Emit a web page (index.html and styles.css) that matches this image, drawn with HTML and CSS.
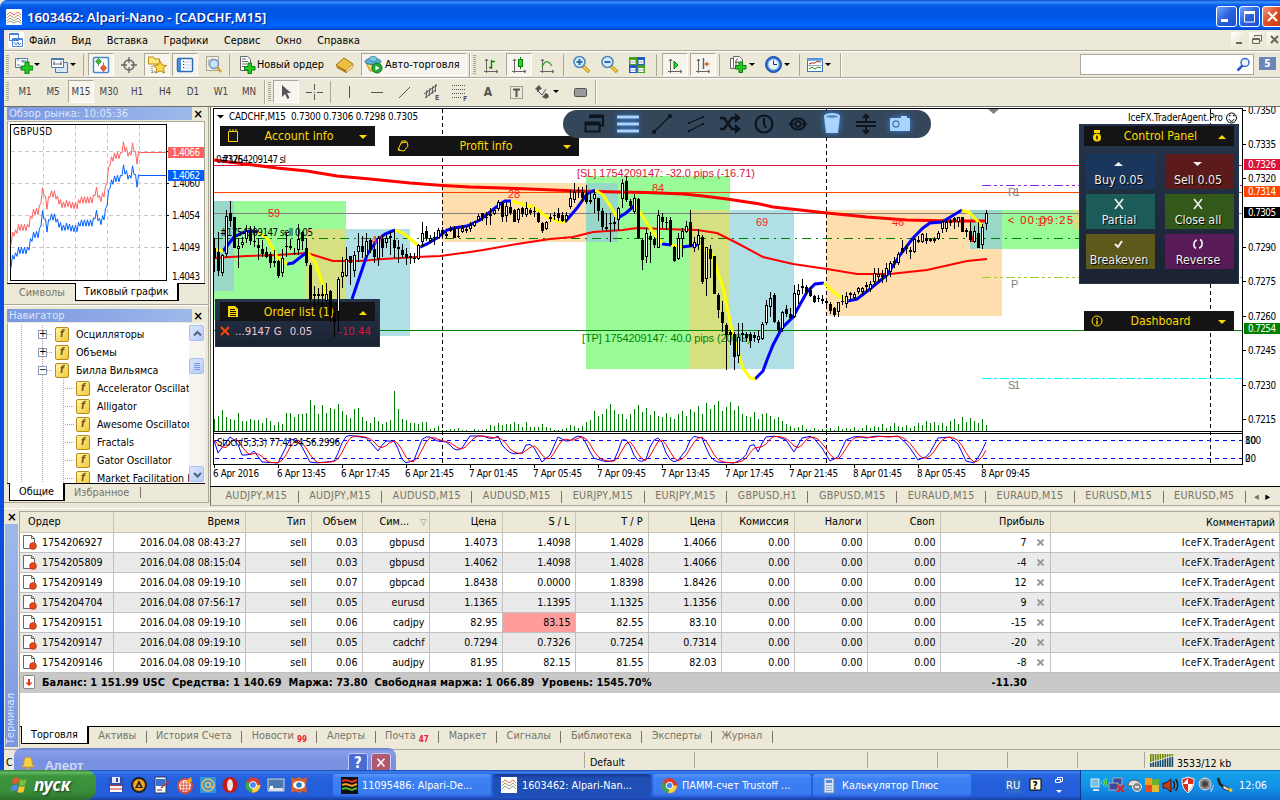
FILE: index.html
```html
<!DOCTYPE html>
<html lang="ru">
  <head>
    <meta charset="utf-8">
    <title>1603462: Alpari-Nano - [CADCHF,M15]</title>
    <link rel="stylesheet" href="styles.css">
  </head>
  <body>
    <div class="desktop">
      <div class="title-bar">
        <svg class="app-icon" width="16" height="16"><rect width="16" height="16" rx="1" fill="#fff"/><path d="M1 6l3-3 4 3 4-3 3 3" stroke="#e07050" fill="none"/><path d="M1 9l3-3 4 3 4-3 3 3" stroke="#d09060" fill="none"/><path d="M1 12l3-3 4 3 4-3 3 3M1 14l3-2 4 2 4-2 3 2" stroke="#90a070" fill="none"/></svg>
        <span class="title-text">1603462: Alpari-Nano - [CADCHF,M15]</span>
        <div class="window-buttons">
          <span class="win-btn"><svg width="19" height="19"><rect x="4" y="12" width="7" height="3" fill="#fff"/></svg></span>
          <span class="win-btn"><svg width="19" height="19"><path d="M4 5h11M4.500 5v10h10V5" stroke="#fff" fill="none"/><rect x="4" y="4" width="11" height="3" fill="#fff"/></svg></span>
          <span class="win-btn win-close"><svg width="19" height="19"><path d="M5 5l9 9M14 5l-9 9" stroke="#fff" stroke-width="2.200"/></svg></span>
        </div>
      </div>

      <div class="window">
        <div class="menu-bar">
          <svg class="menu-icon" width="16" height="16"><rect width="16" height="16" fill="#fff"/><path d="M1.500 1.500h9v7h-9zM4.500 6.500h10v8h-10z" fill="#fff" stroke="#4a80d8"/><path d="M1 2.500h10M4 7.500h11" stroke="#4a80d8"/><path d="M6 10l2 3 2-3 1 3 2-2" stroke="#4a80d8" fill="none"/></svg>
          <span>Файл</span><span>Вид</span><span>Вставка</span><span>Графики</span><span>Сервис</span><span>Окно</span><span>Справка</span>
          <div class="mdi-buttons">
            <b><svg width="16" height="16"><rect x="5" y="10" width="6" height="2" fill="#666658"/></svg></b>
            <b><svg width="16" height="16"><path d="M5.500 5V3.500h7V9H11M3.500 6.500h7v5h-7zM3 7.500h8" stroke="#666658" fill="none"/></svg></b>
            <b><svg width="16" height="16"><path d="M4 4l7 7M11 4l-7 7" stroke="#666658" stroke-width="2"/></svg></b>
          </div>
        </div>

        <div class="toolbar">
          <i class="grip"></i>
          <div class="btn drop"><svg width="19" height="18"><path d="M1.500 2.500h12v9h-12z" fill="#fff" stroke="#4a7ab8"/><path d="M3 4h2M3 9h3M9 4v3M7 5h5" stroke="#4a7ab8"/><path d="M11 6h4v4h4v4h-4v4h-4v-4H7v-4h4z" fill="#22cc22" stroke="#0a7a0a"/></svg></div>
          <div class="btn drop drop-b"><svg width="19" height="18"><path d="M5.500 6.500h12v10h-12z" fill="#d8e6f8" stroke="#4a7ab8"/><path d="M1.500 2.500h12v9h-12z" fill="#fff" stroke="#4a7ab8"/><path d="M2 3.500h11" stroke="#4a7ab8"/><path d="M4 5v4M11 5v4M3 8h9" stroke="#667"/></svg></div>
          <i class="sep"></i>
          <div class="btn on"><svg width="18" height="18"><rect x="1.500" y="1.500" width="15" height="15" rx="1" fill="#fff" stroke="#4a86c8" stroke-width="1.500"/><path d="M6.500 2.500l3 3-3 3-3-3z" fill="#3cb83c" stroke="#0a7a1a" stroke-width=".6"/><path d="M11.500 8.500l3 3.500-3 3.500-3-3.500z" fill="#e86030" stroke="#b02a10" stroke-width=".6"/><path d="M6.500 8v2M11.500 6.500v2" stroke="#777"/></svg></div>
          <div class="btn"><svg width="18" height="18"><circle cx="9" cy="9" r="5" fill="none" stroke="#666" stroke-width="1.500"/><path d="M9 1v6M9 11v6M1 9h6M11 9h6" stroke="#666" stroke-width="1.300"/></svg></div>
          <div class="btn on"><svg width="20" height="20"><path d="M1.500 3.500V2h5l1 2h5v5h-11z" fill="#ffe880" stroke="#b88a10"/><path d="M5 11v7M5 17h4" stroke="#555" stroke-dasharray="1 1"/><path d="M13 6l2 4 4.500.5-3.200 3 1 4.500-4.300-2.300L8.700 18l1-4.500-3.200-3L11 10z" fill="#ffd84a" stroke="#b8860b"/></svg></div>
          <div class="btn on"><svg width="18" height="18"><rect x="1.500" y="2.500" width="15" height="13" rx="1" fill="#fff" stroke="#2a6ab8" stroke-width="1.500"/><rect x="2" y="3" width="3" height="12" fill="#4a8ad8"/><path d="M8 6h7M8 9h7M8 12h7" stroke="#b8ccf0"/><path d="M7 5.500h1M7 8.500h1M7 11.500h1" stroke="#333"/></svg></div>
          <div class="btn"><svg width="19" height="19"><path d="M2.500 1.500h12v14h-12z" fill="#f4f0e0" stroke="#a8a498"/><path d="M5 4v7M8 3v6M12 4v5" stroke="#99a"/><circle cx="10" cy="9" r="4.500" fill="#c8e2f8" stroke="#6898c0" stroke-width="1.400"/><path d="M13 12l4 5" stroke="#d8a020" stroke-width="2.500"/></svg></div>
          <i class="sep"></i>
          <div class="btn new-order"><svg width="20" height="20"><path d="M3.500 1.500h7l3 3v11h-10z" fill="#fff" stroke="#666"/><path d="M5 4h4M5 6.500h6M5 9h5M5 11.500h4" stroke="#666"/><path d="M11 8h3.500v3.500H18V15h-3.500v3.500H11V15H7.500v-3.500H11z" fill="#22cc22" stroke="#0a7a0a"/></svg><span>Новый ордер</span></div>
          <div class="btn gold"><svg width="19" height="18"><path d="M1 9l8-7 9 6-7 8z" fill="#ecc040" stroke="#a87010"/><path d="M1 9l10 5v3L2 12z" fill="#b87818"/><path d="M11 14l7-6v3l-7 6z" fill="#f8e0a0" stroke="#a87010" stroke-width=".6"/></svg></div>
          <div class="btn on auto"><svg width="19" height="19"><path d="M2 8l14-1-3 9H6z" fill="#f0d060" stroke="#b89020"/><ellipse cx="9" cy="6.500" rx="8" ry="3" fill="#5ab0d0" stroke="#2a7a9a"/><ellipse cx="9" cy="4" rx="4" ry="2.600" fill="#7cc8e4" stroke="#2a7a9a" stroke-width=".7"/><circle cx="13" cy="13" r="5" fill="#22a834" stroke="#0a7a1a"/><path d="M11.500 10.500l4 2.500-4 2.500z" fill="#fff"/></svg><span>Авто-торговля</span></div>
          <i class="edge"></i>
          <i class="grip grip-b"></i>
          <div class="btn"><svg width="18" height="18"><path d="M4.500 3v14M2 15.500h14M3 5l1.500-2L6 5M14 14l2 1.500-2 1.500" stroke="#666" fill="none"/><path d="M9.500 4v9M7 11.500h2.500M9.500 5.500H13" stroke="#0a8a0a" stroke-width="1.500"/></svg></div>
          <div class="btn on"><svg width="18" height="18"><path d="M4.500 3v14M2 15.500h14M3 5l1.500-2L6 5M14 14l2 1.500-2 1.500" stroke="#666" fill="none"/><path d="M10.500 1v12" stroke="#0a7a0a"/><rect x="8.500" y="3.500" width="4" height="7" fill="#2ad82a" stroke="#0a7a0a"/></svg></div>
          <div class="btn"><svg width="18" height="18"><path d="M4.500 3v14M2 15.500h14M3 5l1.500-2L6 5M14 14l2 1.500-2 1.500" stroke="#666" fill="none"/><path d="M4 11c3-7 6-7 10-1" stroke="#2a9a2a" fill="none" stroke-width="1.200"/></svg></div>
          <i class="sep"></i>
          <div class="btn"><svg width="19" height="19"><path d="M11 11l6 6" stroke="#b88a10" stroke-width="3.600"/><path d="M11 11l5.500 5.500" stroke="#f4d040" stroke-width="2"/><circle cx="7.500" cy="7" r="5.500" fill="#d8ecfc" stroke="#4a86c0" stroke-width="1.500"/><path d="M4.500 7h6M7.500 4v6" stroke="#2a6aa8" stroke-width="2"/></svg></div>
          <div class="btn"><svg width="19" height="19"><path d="M11 11l6 6" stroke="#b88a10" stroke-width="3.600"/><path d="M11 11l5.500 5.500" stroke="#f4d040" stroke-width="2"/><circle cx="7.500" cy="7" r="5.500" fill="#d8ecfc" stroke="#4a86c0" stroke-width="1.500"/><path d="M4.500 7h6" stroke="#2a6aa8" stroke-width="2"/></svg></div>
          <div class="btn"><svg width="18" height="18"><rect x="1" y="1" width="8" height="8" fill="#48a01c"/><rect x="9" y="1" width="8" height="8" fill="#2458c8"/><rect x="1" y="9" width="8" height="8" fill="#2458c8"/><rect x="9" y="9" width="8" height="8" fill="#48a01c"/><path d="M2.500 4h5v4h-5zM10.500 4h5v4h-5zM2.500 12h5v4h-5zM10.500 12h5v4h-5z" fill="#fff"/><path d="M3 6h4M11 6h4M3 14h4M11 14h4" stroke="#9ab"/></svg></div>
          <i class="sep sep-w"></i>
          <div class="btn on"><svg width="18" height="18"><path d="M4.500 3v14M2 15.500h14M3 5l1.500-2L6 5M14 14l2 1.500-2 1.500" stroke="#666" fill="none"/><path d="M8 5l4 4-4 4z" fill="#2ad82a" stroke="#0a7a0a"/></svg></div>
          <div class="btn on"><svg width="18" height="18"><path d="M4.500 3v14M2 15.500h14M3 5l1.500-2L6 5M14 14l2 1.500-2 1.500" stroke="#666" fill="none"/><path d="M9.500 2v11" stroke="#2a6aa8" stroke-width="1.400"/><path d="M10.500 8l3-2.500v2h2v1h-2v2z" fill="#d84a10"/></svg></div>
          <i class="sep"></i>
          <div class="btn drop drop-c"><svg width="19" height="19"><path d="M1.500 3.500h7v10h-7z" fill="#fff" stroke="#666"/><path d="M4.500 1.500h6l3 3v9h-9z" fill="#fff" stroke="#666"/><path d="M9 4c-2 0-2 1-2 3v4M6 7h4" stroke="#555" fill="none"/><path d="M10 7h3.500v3.500H17V14h-3.500v3.500H10V14H6.500v-3.500H10z" fill="#22cc22" stroke="#0a7a0a"/></svg></div>
          <div class="btn drop"><svg width="19" height="19"><circle cx="9.500" cy="9.500" r="8" fill="#2a6ad0" stroke="#1a4a98"/><circle cx="9.500" cy="9.500" r="5.500" fill="#e8f2fc" stroke="#8ab4e8"/><path d="M9.500 5.500v4h3.500" stroke="#333" fill="none"/></svg></div>
          <i class="sep"></i>
          <div class="btn drop"><svg width="18" height="18"><rect x="1.500" y="2.500" width="15" height="13" fill="#fff" stroke="#3a78b8"/><path d="M1 3.500h16" stroke="#5a98e0" stroke-width="2.500"/><path d="M3 8l3-1 3 0 2-1.500 4 .5" stroke="#a82a1a" fill="none"/><path d="M3 13l3-2 3 2 3-2 3 1" stroke="#1a8a2a" fill="none"/><path d="M2 9.500h14" stroke="#9ab"/></svg></div>
          <i class="edge"></i>
          <div class="search">
            <div class="search-box"><svg width="15" height="15"><circle cx="9" cy="5.500" r="4" fill="#eef4ff" stroke="#3a68d0" stroke-width="1.500"/><path d="M6.500 8.500L1.500 13.500" stroke="#2a58c8" stroke-width="2.500"/></svg></div>
            <div class="mail-count">5</div>
          </div>
        </div>

        <div class="toolbar toolbar-b">
          <i class="grip"></i>
          <div class="btn tf">M1</div><div class="btn tf">M5</div><div class="btn tf on">M15</div><div class="btn tf">M30</div><div class="btn tf">H1</div><div class="btn tf">H4</div><div class="btn tf">D1</div><div class="btn tf">W1</div><div class="btn tf">MN</div>
          <i class="edge"></i>
          <i class="grip grip-b"></i>
          <div class="btn on"><svg width="18" height="18"><path d="M5 2v12l3-3 2.500 5 2-1-2.500-5h4z" fill="#555"/></svg></div>
          <div class="btn"><svg width="18" height="18"><path d="M9.500 1v6M9.500 11v6M1 9.500h6M12 9.500h6" stroke="#555"/><rect x="9" y="9" width="1" height="1" fill="#555"/></svg></div>
          <i class="sep"></i>
          <div class="btn"><svg width="18" height="18"><path d="M10.500 3v12" stroke="#555"/></svg></div>
          <div class="btn"><svg width="18" height="18"><path d="M4 9.500h12" stroke="#555"/></svg></div>
          <div class="btn"><svg width="18" height="18"><path d="M4 15L15 4" stroke="#555"/></svg></div>
          <div class="btn"><svg width="20" height="20"><path d="M2 12L15 3M3 16l11-8M5 8l-1 8M8 6l-1 8M11 4l-1 8M14 2l-1 8" stroke="#555" fill="none"/><text class="icon-letter" x="13" y="18">E</text></svg></div>
          <div class="btn"><svg width="20" height="20"><path d="M2 3.500h14M2 7.500h14M2 11.500h14M2 15.500h10" stroke="#555" stroke-dasharray="1 1"/><text class="icon-letter" x="13" y="19">F</text></svg></div>
          <div class="btn letter">A</div>
          <div class="btn"><svg width="18" height="18"><rect x="3.500" y="3.500" width="12" height="12" fill="none" stroke="#555" stroke-dasharray="1 1"/><path d="M6 6.500h7M9.500 6v8" stroke="#555" stroke-width="2"/></svg></div>
          <div class="btn drop"><svg width="19" height="18"><path d="M2 6l4-4 3 4-3 1v2H4V7zM9 14l3-3v-1l3 1 1 3-3 2z" fill="#555"/><path d="M6 9l3 3 4-6" stroke="#555" fill="none"/></svg></div>
          <div class="btn"><svg width="18" height="18"><rect x="3.500" y="5.500" width="12" height="8" rx="1" fill="#999" stroke="#555"/></svg></div>
          <i class="edge"></i>
        </div>

        <div class="workspace">
          <div class="side">
            <div class="market-watch">
              <div class="pane-title"><span>Обзор рынка: 10:05:36</span><b>×</b></div>
              <div class="pane-body"><svg class="tick-chart" id="ticks" width="198" height="162" viewBox="8 122 198 162"></svg></div>
              <div class="tabs tabs-market"><span>Символы</span><span class="active">Тиковый график</span></div>
            </div>
            <div class="navigator">
              <div class="pane-title"><span>Навигатор</span><b>×</b></div>
              <div class="nav-body">
                <div class="tree" id="tree"></div>
                <div class="scrollbar">
                  <i><svg width="15" height="15"><path d="M4 9.500l3.500-3.500 3.500 3.500" stroke="#4d6185" stroke-width="2" fill="none"/></svg></i>
                  <i class="thumb"><svg width="15" height="15"><path d="M4 4.500h6M4 6.500h6M4 8.500h6M4 10.500h6" stroke="#7a9ae0"/></svg></i>
                  <i><svg width="15" height="15"><path d="M4 6l3.500 3.500L11 6" stroke="#4d6185" stroke-width="2" fill="none"/></svg></i>
                </div>
              </div>
              <div class="tabs tabs-nav"><span class="active">Общие</span><span>Избранное</span><em></em></div>
            </div>
          </div>

          <div class="chart-area">
            <div class="chart">
              <svg class="layer" id="chart" width="1070" height="380" viewBox="210 107 1070 380"></svg>

              <div class="panel-bar account"><svg width="12" height="16"><path d="M1.500 3.500h9v10h-9zM3 1v3M6 1v3M9 1v3" stroke="#ffd800" fill="none"/></svg><span>Account info</span><i class="down"></i></div>
              <div class="panel-bar profit"><svg width="13" height="14"><path d="M5 4l6-1 1 4-4 5-6-1zM5 4l1-2 4 0v1M2 9l2 2" stroke="#ffd800" fill="none"/></svg><span>Profit info</span><i class="down"></i></div>

              <div class="tool-pill">
                <svg width="24" height="24"><path d="M7 3.500h14v10h-3M3.500 10.500h14v9h-14z" fill="#34465a" stroke="#0c141e" stroke-width="2"/><path d="M7 4.500h14M3 12h15" stroke="#0c141e" stroke-width="3"/></svg>
                <svg class="lit" width="24" height="24"><path d="M1 5h22M1 12h22M1 19h22" stroke="#a8d4ff" stroke-width="3"/></svg>
                <svg width="24" height="24"><path d="M4 20L20 4" stroke="#0c141e" stroke-width="1.500"/><circle cx="4" cy="20" r="2" fill="#0c141e"/><circle cx="20" cy="4" r="2" fill="#0c141e"/></svg>
                <svg width="24" height="24"><path d="M5 11L19 5M5 19l14-7" stroke="#0c141e" stroke-width="1.300"/><path d="M4 10h2v2H4zM18 4h2v2h-2zM4 18h2v2H4zM18 11h2v2h-2z" fill="#0c141e"/></svg>
                <svg width="24" height="24"><path d="M2 6h4l8 11h4M2 17h4l8-11h4" stroke="#0c141e" stroke-width="2.500" fill="none"/><path d="M17 1l6 5-6 5zM17 12l6 5-6 5z" fill="#0c141e"/></svg>
                <svg width="24" height="24"><circle cx="12" cy="12" r="8.500" stroke="#0c141e" stroke-width="2.200" fill="none"/><path d="M12 6v6l2 4" stroke="#0c141e" stroke-width="2" fill="none"/></svg>
                <svg width="24" height="24"><circle cx="12" cy="12" r="2.800" stroke="#0c141e" stroke-width="2" fill="none"/><path d="M5 11c3-6 11-6 14 0M5 13c3 6 11 6 14 0" stroke="#0c141e" stroke-width="2.200" fill="none"/><path d="M2 13l4-4 2 4zM22 11l-4 4-2-4z" fill="#0c141e"/></svg>
                <svg class="lit" width="24" height="24"><path d="M4 4h16l-2 17H6z" fill="#a8d4ff"/><ellipse cx="12" cy="4" rx="8" ry="3" fill="#a8d4ff"/><ellipse cx="12" cy="4.500" rx="6" ry="1.500" fill="#5a8cc0"/></svg>
                <svg width="24" height="24"><path d="M2 10h20M2 14h20" stroke="#0c141e" stroke-width="2"/><path d="M12 1l4 5h-3v4h-2V6H8zM12 23l4-5h-3v-4h-2v4H8z" fill="#0c141e"/></svg>
                <svg class="lit" width="24" height="24"><rect x="2" y="6" width="20" height="13" rx="1" fill="#a8d4ff"/><rect x="13" y="4" width="6" height="4" fill="#a8d4ff"/><circle cx="8" cy="12" r="3" fill="none" stroke="#4a7cb0" stroke-width="1.300"/></svg>
              </div>

              <div class="order-list">
                <div class="panel-bar"><svg width="12" height="13"><path d="M1 1h7l3 3v8H1z" fill="#ffd800"/><path d="M3 4.500h5M3 6.500h6M3 8.500h6M3 10.500h6" stroke="#111"/></svg><span>Order list (1)</span><i class="up"></i></div>
                <div class="order-line"><svg width="10" height="10"><path d="M1 1l8 8M9 1l-8 8" stroke="#ff4500" stroke-width="2"/></svg><span>...9147 G</span><span>0.05</span><span class="loss">-10.44</span></div>
              </div>
              <svg class="layer" id="candles" width="1070" height="380" viewBox="210 107 1070 380"></svg>

              <div class="control">
                <div class="panel-bar"><svg width="12" height="14"><path d="M3 1h6v3H3z" fill="#ffd800"/><circle cx="6" cy="8.500" r="4" fill="#ffd800"/><path d="M6 6.500v4" stroke="#111" stroke-width="1.500"/></svg><span>Control Panel</span><i class="up"></i></div>
                <div class="control-grid">
                  <div class="action buy"><i><svg width="12" height="6"><path d="M1 5h9L5.500 1z" fill="#f0f0f0"/></svg></i>Buy 0.05</div>
                  <div class="action sell"><i><svg width="12" height="6"><path d="M1 1h9L5.500 5z" fill="#f0f0f0"/></svg></i>Sell 0.05</div>
                  <div class="action partial"><i><svg width="12" height="12"><path d="M2 1l8 10M10 1L2 11" stroke="#f0f0f0" stroke-width="1.600"/></svg></i>Partial</div>
                  <div class="action close-all"><i><svg width="12" height="12"><path d="M2 1l8 10M10 1L2 11" stroke="#f0f0f0" stroke-width="1.600"/></svg></i>Close all</div>
                  <div class="action even"><i><svg width="12" height="12"><path d="M2 6l3 3 4-6" stroke="#f0f0f0" stroke-width="2" fill="none"/></svg></i>Breakeven</div>
                  <div class="action reverse"><i><svg width="12" height="12"><path d="M5 2C1 3 1 9 4 10.500M7 10c4-1 4-7 1-8.500" stroke="#f0f0f0" stroke-width="1.600" fill="none"/></svg></i>Reverse</div>
                </div>
              </div>
              <div class="panel-bar dashboard"><svg width="12" height="14"><circle cx="6" cy="7" r="5" fill="none" stroke="#ffd800"/><path d="M6 4v1.500M6 6.500v4" stroke="#ffd800" stroke-width="1.500"/></svg><span>Dashboard</span><i class="down"></i></div>
            </div>
            <div class="chart-tabs">
              <span>AUDJPY,M15</span><span>AUDJPY,M15</span><span>AUDUSD,M15</span><span>AUDUSD,M15</span><span>EURJPY,M15</span><span>EURJPY,M15</span><span>GBPUSD,H1</span><span>GBPUSD,M15</span><span>EURAUD,M15</span><span>EURAUD,M15</span><span>EURUSD,M15</span><span>EURUSD,M5</span><b>◂ &nbsp;<strong>▸</strong></b>
            </div>
          </div>
        </div>

        <div class="terminal">
          <div class="terminal-strip"><b>×</b><div><span>Терминал</span></div></div>
          <div class="terminal-main">
            <table>
              <thead>
                <tr><th class="c-order">Ордер</th><th class="c-time">Время</th><th class="c-type">Тип</th><th class="c-vol">Объем</th><th class="c-sym">Сим... <small>▽</small></th><th class="c-n">Цена</th><th class="c-n">S / L</th><th class="c-n">T / P</th><th class="c-n">Цена</th><th class="c-n">Комиссия</th><th class="c-n">Налоги</th><th class="c-n">Своп</th><th class="c-profit">Прибыль</th><th>Комментарий</th></tr>
              </thead>
              <tbody id="orders"></tbody>
            </table>
            <div class="balance"><svg width="13" height="15"><rect x=".5" y=".5" width="11" height="13" rx="1" fill="#fff" stroke="#888"/><path d="M6 11L2.500 7.500H5V4h2v3.500h2.500z" fill="#d83a10"/></svg><span>Баланс: 1 151.99 USC&nbsp; Средства: 1 140.69&nbsp; Маржа: 73.80&nbsp; Свободная маржа: 1 066.89&nbsp; Уровень: 1545.70%</span><span class="total">-11.30</span></div>
            <div class="terminal-space"></div>
            <div class="tabs tabs-terminal"><span class="active">Торговля</span><span>Активы</span><span>История Счета</span><span>Новости <sub>99</sub></span><span>Алерты</span><span>Почта <sub>47</sub></span><span>Маркет</span><span>Сигналы</span><span>Библиотека</span><span>Эксперты</span><span>Журнал</span></div>
          </div>
        </div>

        <div class="status-bar">
          <span class="s-help">С</span><span class="s-profile">Default</span><span class="s-a"></span><span class="s-b"></span><span class="s-b"></span><span class="s-b"></span><span class="s-c"></span>
          <span class="s-net"><svg id="signal" width="24" height="14"></svg>3533/12 kb</span>
        </div>

        <div class="alert-window">
          <svg width="14" height="15"><path d="M7 1c4 0 4 4 4.500 8l2 2h-13l2-2C3 5 3 1 7 1z" fill="#f8d040" stroke="#c89010" stroke-width=".7"/><circle cx="7" cy="12.500" r="1.500" fill="#e0a010"/></svg>
          <span>Алерт</span><b class="help">?</b><b class="x">✕</b>
        </div>
      </div>

      <div class="taskbar">
        <div class="start">
          <svg width="20" height="20"><path d="M3 4c2-2 4-2 6-.5L8 9c-2-1-4-1-6 .5z" fill="#e8552a"/><path d="M10 4c2 1.500 4 1.500 6.500 0L15 10c-2 1-4 1-6 0z" fill="#7ac043"/><path d="M2 11c2-1.500 4-1.500 6-.5L6.500 16c-2-1-4-1-6 .5z" fill="#4a8af4"/><path d="M9 11c2 1 4 1 6 0l-1.500 6c-2 1-4 1-6 0z" fill="#fbc82c"/></svg>
          <span>пуск</span>
        </div>
        <div class="quick">
          <svg width="18" height="18"><rect x="2" y="1" width="14" height="16" rx="1" fill="#2a50b0"/><rect x="5" y="1" width="8" height="6" fill="#e8e8f0"/><rect x="9" y="2" width="2" height="4" fill="#2a50b0"/><rect x="3" y="9" width="12" height="7" fill="#fff"/><path d="M3 9.500h12M3 13h12" stroke="#c33"/></svg>
          <svg width="18" height="18"><circle cx="9" cy="9" r="7" fill="#f0a820" stroke="#222" stroke-width="2"/><path d="M9 4l4 8H5z" fill="#222"/><path d="M9 8l1.500 3h-3z" fill="#f0a820"/></svg>
          <svg width="18" height="18"><path d="M2 1h11v16H2z" fill="#fff" stroke="#335"/><path d="M3 3h9v7H3z" fill="#3a70d0"/><path d="M4 14h5" stroke="#335"/><path d="M8 12l8-7" stroke="#c33" stroke-width="1.500"/></svg>
          <svg width="18" height="18"><circle cx="9" cy="10" r="7" fill="#fff" stroke="#d84a3a" stroke-width="2"/><path d="M4 8h10M3 11h12M5 14h8M6 5v10M9 5v12M12 5v10" stroke="#d84a3a" stroke-width="1" fill="none"/><path d="M10 5l5-4 1 4-4 3z" fill="#f8a020"/></svg>
          <svg width="18" height="18"><rect x="1" y="1" width="16" height="16" fill="#2a9ae0"/><circle cx="9" cy="9" r="6" fill="none" stroke="#f4b860" stroke-width="1.500"/><circle cx="9" cy="9" r="2.500" fill="none" stroke="#f4b860" stroke-width="1.500"/><path d="M11.500 6.500v3.500c0 2 3 2 3.500-1" fill="none" stroke="#f4b860" stroke-width="1.300"/></svg>
          <svg width="18" height="18"><ellipse cx="9" cy="9" rx="7.500" ry="8" fill="#c81818"/><ellipse cx="9" cy="9" rx="3" ry="6" fill="#f4e4e4"/></svg>
          <svg width="18" height="18"><circle cx="9" cy="9" r="7.500" fill="#e03a2a"/><path d="M9 9L2.500 5.500A7.500 7.500 0 0 0 8 16.500z" fill="#3aa84a"/><path d="M9 9h7.500A7.500 7.500 0 0 1 8 16.500z" fill="#fbd03a"/><circle cx="9" cy="9" r="3.500" fill="#4a8af4" stroke="#fff"/></svg>
          <svg width="18" height="18"><rect x="1" y="3" width="16" height="12" fill="#4a7ab0" stroke="#c8d0d8"/><rect x="2" y="12" width="14" height="3" fill="#d8e0e8"/><rect x="3" y="10" width="3" height="3" fill="#fff"/></svg>
          <svg width="18" height="18"><path d="M1 1l4 2 4-2 4 2 4-2-1 8 1 8-4-2-4 2-4-2-4 2 1-8z" fill="#d8602a"/><ellipse cx="9" cy="9" rx="6" ry="4" fill="#fff"/><circle cx="9" cy="9" r="2.800" fill="#2a80c0"/></svg>
        </div>
        <div class="tasks">
          <div class="task"><svg width="17" height="17"><rect width="17" height="17" fill="#111"/><path d="M1 4l4-1 6 2 5-2" stroke="#e83020" stroke-width="2" fill="none"/><path d="M1 8l4-1 6 2 5-2" stroke="#f0a020" stroke-width="2" fill="none"/><path d="M1 12l4-1 6 2 5-2" stroke="#50b030" stroke-width="2" fill="none"/></svg><span>11095486: Alpari-De...</span></div>
          <div class="task current"><svg width="17" height="17"><rect width="16" height="16" fill="#fff"/><path d="M1 6l3-3 4 3 4-3 3 3" stroke="#e07050" fill="none"/><path d="M1 9l3-3 4 3 4-3 3 3M1 12l3-3 4 3 4-3 3 3" stroke="#90a070" fill="none"/></svg><span>1603462: Alpari-Nan...</span></div>
          <div class="task"><svg width="17" height="17"><circle cx="8.500" cy="8.500" r="7.500" fill="#e03a2a"/><path d="M8.500 8.500L2 5A7.500 7.500 0 0 0 7.500 16z" fill="#3aa84a"/><path d="M8.500 8.500H16A7.500 7.500 0 0 1 7.500 16z" fill="#fbd03a"/><circle cx="8.500" cy="8.500" r="3.300" fill="#4a8af4" stroke="#fff"/></svg><span>ПАММ-счет Trustoff ...</span></div>
          <div class="task"><svg width="17" height="17"><rect x="3" y="1" width="10" height="15" rx="1" fill="#d8e4f4" stroke="#6a88b8"/><rect x="5" y="3" width="6" height="3" fill="#5a8ad0"/><path d="M5 8.500h6M5 11h6M5 13.500h6" stroke="#6a88b8" stroke-dasharray="1.500 .7"/></svg><span>Калькулятор Плюс</span></div>
        </div>
        <div class="lang"><span>RU</span><svg width="14" height="14"><path d="M1 1h11v11H1z" fill="#ffffe0" stroke="#000"/><text class="lang-q" x="3.500" y="11">?</text></svg><svg class="restore" width="10" height="18"><path d="M3.500 3V1.500h5v4H7M1.500 3.500h5v3h-5z" stroke="#fff" fill="none"/><path d="M2 14h6l-3 3z" fill="#fff"/></svg></div>
        <div class="tray">
          <svg width="17" height="18"><rect x="1" y="3" width="8" height="8" fill="#7ac0e8" stroke="#d8e8f0"/><path d="M3 14h6" stroke="#ddd" stroke-width="2"/><path d="M11 5c1 1 1 2 0 3M13 3.500c2 2 2 4 0 6M15 2c2.500 3 2.500 6 0 9" stroke="#6ae040" stroke-width="1.200" fill="none"/></svg>
          <svg width="17" height="18"><rect x="5" y="2" width="9" height="7" fill="#3a4a98" stroke="#aab"/><rect x="1" y="7" width="9" height="7" fill="#3a4a98" stroke="#aab"/><path d="M9 9l7 7M16 9l-7 7" stroke="#e82020" stroke-width="2.200"/></svg>
          <svg width="17" height="18"><path d="M2 10c0-8 12-8 12 0z" fill="#ddd" stroke="#555"/><circle cx="11" cy="11" r="4.500" fill="#888" stroke="#eee"/><path d="M9 11h4" stroke="#fff" stroke-width="1.500"/></svg>
          <svg width="17" height="18"><rect x="1" y="2" width="7" height="7" fill="#f0a020"/><rect x="8" y="3" width="7" height="6" fill="#6ab030"/><rect x="2" y="9" width="6" height="7" fill="#e84a20"/><rect x="8" y="9" width="7" height="7" fill="#e0c030"/></svg>
          <svg width="17" height="18"><path d="M1 7h3l5-4v13l-5-4H1z" fill="#b84020" stroke="#401008"/><path d="M11 5c2 2 2 6 0 8M13.500 3c3 4 3 8 0 12" stroke="#301008" stroke-width="1.400" fill="none"/></svg>
          <svg width="17" height="18"><path d="M2 3l6-2 6 2c0 6-1 10-6 14C3 13 2 9 2 3z" fill="#d83020" stroke="#eee"/><path d="M8 2v6H3M8 8h5c-1 4-2 6-5 8z" fill="#fff"/></svg>
          <svg width="17" height="18"><circle cx="7" cy="8" r="6" fill="#888" stroke="#ddd"/><circle cx="7" cy="8" r="3" fill="#444"/><path d="M13 12v4M15.500 9l-2 6" stroke="#ccc"/></svg>
          <svg width="17" height="18"><path d="M2 2l2 6 5 4" stroke="#222" stroke-width="2.500" fill="none"/><path d="M7 9l6 3v3l-6-2z" fill="#ddd" stroke="#333"/><path d="M13 13l3 2" stroke="#e8d020" stroke-width="3"/></svg>
          <span>12:06</span>
        </div>
      </div>
    </div>
    <script src="chart.js"></script>
  </body>
</html>
```

FILE: styles.css
```css
body {
  margin: 0;
  width: 1280px;
  height: 800px;
  overflow: hidden;
  font-family: "DejaVu Sans Condensed", "DejaVu Sans", sans-serif;
  font-stretch: condensed;
  font-size: 10.6px;
  color: #000;
  background-color: #ece9d8;
}

svg {
  display: block;
  flex: none;
}

i, em {
  font-style: normal;
}

.desktop {
  display: flex;
  flex-direction: column;
  height: 800px;
}

/* title bar */
.title-bar {
  display: flex;
  align-items: center;
  height: 30px;
  padding: 3px 0 0 6px;
  box-sizing: border-box;
  overflow: hidden;
  border-top-left-radius: 7px;
  background: linear-gradient(#0a4ad0 0, #3a92ff 7%, #0b62ee 16%, #0054e0 30%, #0058ea 60%, #0066ff 85%, #0050e0 96%, #0038b0 100%);
}

.title-text {
  margin-left: 5px;
  color: #fff;
  font-family: "Noto Sans", sans-serif;
  font-stretch: normal;
  font-size: 13.2px;
  font-weight: 600;
  text-shadow: 1px 1px 1px #0a1883;
  white-space: nowrap;
}

.window-buttons {
  display: flex;
  gap: 2px;
  margin-left: auto;
  margin-right: -3px;
}

.win-btn {
  width: 19px;
  height: 19px;
  border: 1px solid #fff;
  border-radius: 3px;
  background: linear-gradient(135deg, #7aa4f8, #2860e0 50%, #1a50d0);
}

.win-close {
  background: linear-gradient(135deg, #f09a80, #e04a20 50%, #c83a10);
}

/* main window */
.window {
  position: relative;
  display: flex;
  flex-direction: column;
  height: 740px;
  border-left: 4px solid #0a4ee0;
  box-sizing: border-box;
  background-color: #ece9d8;
}

.menu-bar {
  display: flex;
  align-items: center;
  height: 20px;
  padding-left: 4px;
  border-bottom: 1px solid #aca899;
  box-shadow: 0 1px 0 #fff;
  font-size: 10.8px;
}

.menu-icon {
  margin-right: -3px;
}

.menu-bar span {
  padding: 0 7.600px 0 8px;
}

.mdi-buttons {
  display: flex;
  gap: 2px;
  margin-left: auto;
  margin-right: -3px;
}

.mdi-buttons b {
  width: 16px;
  height: 16px;
  background: linear-gradient(135deg, #fff, #ece9d8 60%);
}

.toolbar {
  display: flex;
  align-items: center;
  gap: 2px;
  height: 26px;
  margin-top: 1px;
  padding-left: 2px;
  border-bottom: 1px solid #aca899;
  box-sizing: border-box;
}

.toolbar-b {
  border-top: 1px solid #fff;
  border-bottom: 0;
  margin-top: 0;
}

.grip {
  width: 3px;
  height: 20px;
  margin-right: 1px;
  background: repeating-linear-gradient(#aca899 0 1px, #ece9d8 1px 2px);
}

.grip-b {
  margin-right: 0;
}

.sep {
  width: 1px;
  height: 22px;
  margin: 0 2px 0 1px;
  background-color: #aca899;
}

.sep-w {
  margin: 0 3px 0 4px;
}

.edge {
  width: 1px;
  height: 24px;
  border-right: 1px solid #fff;
  background-color: #aca899;
}

.btn {
  display: flex;
  flex: none;
  align-items: center;
  justify-content: center;
  width: 26px;
  height: 23px;
  box-sizing: border-box;
  white-space: nowrap;
}

.on {
  border: 1px solid #aca899;
  border-right-color: #fff;
  border-bottom-color: #fff;
  background-color: #f6f4ec;
}

.drop {
  width: 34px;
  justify-content: flex-start;
  padding-left: 2px;
}

.drop::after {
  content: "";
  margin-left: 1px;
  border: 3px solid transparent;
  border-top-color: #000;
  border-bottom: 0;
}

.drop-b {
  width: 32px;
}

.drop-c {
  width: 36px;
  padding-left: 5px;
}

.new-order {
  width: 90px;
  justify-content: flex-start;
  padding-left: 3px;
  font-size: 10.8px;
}

.gold {
  width: 33px;
  padding-left: 4px;
}

.auto {
  width: 106px;
  justify-content: flex-start;
  padding-left: 2px;
  font-size: 10.9px;
}

.auto span {
  margin-left: 2px;
}

.new-order span, .auto span {
  padding-bottom: 1px;
}

.tf {
  color: #444;
  font-size: 9.8px;
}

.letter {
  color: #555;
  font-size: 12px;
  font-weight: bold;
}

.icon-letter {
  font-size: 7px;
  font-weight: bold;
  fill: #555;
}

.search {
  display: flex;
  align-items: center;
  margin-left: auto;
}

.search-box {
  display: flex;
  align-items: center;
  justify-content: flex-end;
  width: 170px;
  height: 19px;
  padding-right: 2px;
  border: 1px solid #aca899;
  background-color: #fff;
}

.mail-count {
  width: 17px;
  height: 13px;
  margin: 0 4px 2px 5px;
  background-color: #6a86b8;
  color: #fff;
  font-size: 10px;
  font-weight: bold;
  line-height: 13px;
  text-align: center;
}

/* workspace */
.workspace {
  display: flex;
  height: 401px;
  margin-top: 2px;
  border-top: 1px solid #716f64;
  box-sizing: border-box;
}

.side {
  display: flex;
  flex-direction: column;
  width: 205px;
}

.market-watch, .navigator {
  display: flex;
  flex-direction: column;
  padding: 0 3px;
  border-right: 1px solid #aca899;
  border-bottom: 1px solid #aca899;
  box-sizing: border-box;
}

.market-watch {
  height: 198px;
}

.navigator {
  height: 198px;
  padding-top: 3px;
  border-top: 1px solid #fff;
}

.pane-title {
  display: flex;
  flex: none;
  justify-content: space-between;
  align-items: center;
  height: 13px;
  margin-bottom: 1px;
}

.pane-title span {
  width: 185px;
  height: 13px;
  padding-left: 2px;
  box-sizing: border-box;
  background: linear-gradient(90deg, #7b97e0, #9db9eb);
  color: #dce6fa;
  font-size: 11.1px;
  line-height: 13px;
}

.pane-title b {
  margin-right: 2px;
  font-size: 13px;
  line-height: 12px;
}

.pane-body {
  flex: none;
  height: 162px;
  overflow: hidden;
  border: 1px solid #aca899;
  border-bottom: 0;
  box-sizing: border-box;
  background-color: #fff;
}

.nav-body {
  display: flex;
  flex: none;
  height: 160px;
  overflow: hidden;
  border-left: 1px solid #aca899;
  background-color: #fff;
}

.tree {
  flex: 1;
  overflow: hidden;
  padding-top: 2px;
}

.leaf, .branch {
  display: flex;
  align-items: center;
  height: 18px;
  white-space: nowrap;
  background: repeating-linear-gradient(#aaa 0 1px, transparent 1px 2px) 13px 0 / 1px 100% no-repeat, repeating-linear-gradient(#aaa 0 1px, transparent 1px 2px) 34px 0 / 1px 100% no-repeat;
}

.leaf {
  background: repeating-linear-gradient(#aaa 0 1px, transparent 1px 2px) 13px 0 / 1px 100% no-repeat, repeating-linear-gradient(#aaa 0 1px, transparent 1px 2px) 34px 0 / 1px 100% no-repeat, repeating-linear-gradient(#aaa 0 1px, transparent 1px 2px) 55px 0 / 1px 100% no-repeat;
}

.branch::before {
  content: attr(data-sign);
  flex: none;
  width: 7px;
  height: 7px;
  margin: 1px 0 0 30px;
  border: 1px solid #8a9ab8;
  background-color: #fff;
  font-size: 10px;
  line-height: 6px;
  text-align: center;
}

.dots {
  flex: none;
  width: 6px;
  height: 1px;
  margin-right: 2px;
  background: repeating-linear-gradient(90deg, #aaa 0 1px, transparent 1px 2px);
}

.leaf .dots {
  width: 10px;
  margin-left: 57px;
  margin-right: 1px;
}

.fn {
  flex: none;
  width: 12px;
  height: 13px;
  margin-right: 7px;
  border: 1px solid #b88a18;
  border-radius: 2px;
  background: linear-gradient(135deg, #fff6a8, #f0c838);
  color: #7a5208;
  font-size: 10px;
  font-style: italic;
  font-weight: bold;
  line-height: 12px;
  text-align: center;
}

.scrollbar {
  display: flex;
  flex-direction: column;
  width: 16px;
  padding: 2px 0 1px;
  background-color: #f5f4ee;
}

.scrollbar i {
  width: 13px;
  height: 14px;
  overflow: hidden;
  border: 1px solid #a8bef0;
  border-radius: 2px;
  background: linear-gradient(135deg, #dce6fe, #b8ccf8);
}

.scrollbar .thumb {
  margin: 17px 0 auto;
}

.tabs {
  display: flex;
  flex: none;
  align-items: flex-start;
  height: 18px;
  border-top: 1px solid #000;
  color: #777568;
  line-height: 18px;
  font-size: 10.8px;
  white-space: nowrap;
}

.tabs .active {
  height: 17px;
  margin-top: -1px;
  border: 1px solid #000;
  border-right-width: 2px;
  border-top: 0;
  background-color: #fff;
  color: #000;
}

.tabs-market span {
  padding: 0 10px 0 12px;
}

.tabs-market .active {
  padding: 0 8px;
}

.tabs-nav span {
  padding: 0 9px;
}

.tabs-nav .active {
  margin-left: 2px;
}

.tabs-nav em {
  height: 11px;
  margin: 3px 0 0 2px;
  border-left: 1px solid #777568;
}

/* chart */
.chart-area {
  display: flex;
  flex-direction: column;
  margin-left: 1px;
  width: 1070px;
}

.chart {
  position: relative;
  height: 379px;
  overflow: hidden;
  border-bottom: 1px solid #000;
  background-color: #fff;
}

.layer {
  position: absolute;
  left: 0;
  top: 0;
}

.axis {
  font-size: 9.8px;
}

.arial {
  font-family: "Liberation Sans", sans-serif;
  font-stretch: normal;
  font-size: 11px;
}

.panel-bar {
  display: flex;
  align-items: center;
  height: 20px;
  padding: 0 8px 0 7px;
  box-sizing: border-box;
  background-color: #141414;
  color: #ffd800;
  font-size: 12.3px;
}

.panel-bar span {
  flex: 1;
  text-align: center;
}

.panel-bar .down {
  margin-top: 2px;
  border: 4.500px solid transparent;
  border-top: 4px solid #ffd800;
  border-bottom: 0;
}

.panel-bar .up {
  margin-top: 2px;
  border: 4.500px solid transparent;
  border-bottom: 4px solid #ffd800;
  border-top: 0;
}

.account {
  position: absolute;
  left: 10px;
  top: 19px;
  width: 155px;
}

.profit {
  position: absolute;
  left: 179px;
  top: 29px;
  width: 190px;
}

.dashboard {
  position: absolute;
  left: 874px;
  top: 204px;
  width: 150px;
}

.tool-pill {
  position: absolute;
  left: 353px;
  top: 3px;
  display: flex;
  align-items: center;
  gap: 10px;
  width: 368px;
  height: 28px;
  padding-left: 19px;
  box-sizing: border-box;
  border-radius: 14px;
  background-color: #34465a;
}

.lit {
  filter: drop-shadow(0 0 3px #3a8ae8);
}

.order-list {
  position: absolute;
  left: 5px;
  top: 192px;
  width: 165px;
  height: 48px;
  padding: 2px 4px;
  box-sizing: border-box;
  border: 1px solid #24344c;
  background: linear-gradient(#26354c, #1a2232);
}

.order-list .panel-bar {
  height: 19px;
}

.order-line {
  display: flex;
  align-items: center;
  gap: 8px;
  height: 20px;
  color: #f0c8d0;
  font-size: 11.3px;
}

.order-line svg {
  margin-right: -3px;
}

.loss {
  flex: 1;
  margin-right: 4px;
  color: #dc143c;
  text-align: right;
}

.control {
  position: absolute;
  left: 869px;
  top: 17px;
  width: 160px;
  height: 160px;
  padding: 1px 4px;
  box-sizing: border-box;
  border: 1px solid #24344c;
  background: linear-gradient(#26354c, #1a2232);
}

.control-grid {
  display: grid;
  grid-template-columns: 69px 69px;
  gap: 5px 10px;
  margin: 8px 0 0 2px;
}

.action {
  display: flex;
  flex-direction: column;
  align-items: center;
  height: 35px;
  padding-right: 3px;
  box-sizing: border-box;
  color: #f0f0f0;
  font-size: 12.3px;
  line-height: 14px;
  text-shadow: 1px 1px 1px #000;
}

.action i {
  display: flex;
  align-items: center;
  height: 19px;
  padding-top: 1px;
  box-sizing: border-box;
}

.buy { background-color: #1a365d; }
.sell { background-color: #5c1a1a; }
.partial { background-color: #1c5c58; }
.close-all { background-color: #33591a; }
.even { background-color: #5c591a; }
.reverse { background-color: #591a59; }

.chart-tabs {
  display: flex;
  height: 18px;
  padding: 0 0 0 4px;
  border-left: 1px solid #716f64;
  border-bottom: 1px solid #aca899;
  color: #777568;
  line-height: 18px;
  white-space: nowrap;
}

.chart-tabs span {
  position: relative;
  padding: 0 11.500px 0 10.500px;
  font-size: 10.7px;
  letter-spacing: 0.28px;
}

.chart-tabs span::after, .tabs-terminal span + span::after {
  content: "";
  position: absolute;
  right: 0;
  top: 4px;
  height: 12px;
  border-left: 1px solid #777568;
}

.chart-tabs b {
  margin-left: 8px;
}

.chart-tabs strong {
  color: #000;
}

/* terminal */
.terminal {
  display: flex;
  height: 239px;
  margin-top: 1px;
  border-top: 1px solid #fff;
  box-sizing: border-box;
}

.terminal-strip {
  width: 15px;
  padding-left: 1px;
  box-sizing: border-box;
}

.terminal-strip b {
  display: block;
  height: 15px;
  padding-left: 2px;
  font-size: 13px;
  line-height: 15px;
}

.terminal-strip div {
  display: flex;
  align-items: flex-end;
  width: 13px;
  height: 223px;
  background: linear-gradient(#9db9eb, #7b97e0);
  color: #dce6fa;
}

.terminal-strip span {
  padding: 3px 0 0;
  font-size: 11px;
  line-height: 12px;
  writing-mode: vertical-rl;
  transform: rotate(180deg);
}

.terminal-main {
  display: flex;
  flex-direction: column;
  flex: 1;
  margin-top: 2px;
  border-left: 1px solid #aca899;
  border-top: 1px solid #aca899;
  background-color: #fff;
}

table {
  width: 1260px;
  table-layout: fixed;
  border-collapse: collapse;
}

th {
  height: 20px;
  padding: 0 5px 0 0;
  border-right: 1px solid #c8c5b4;
  border-bottom: 1px solid #c8c5b4;
  background-color: #ece9d8;
  font-size: 10.8px;
  font-weight: normal;
  text-align: right;
  white-space: nowrap;
  box-sizing: border-box;
}

th:last-child {
  padding-right: 4px;
  font-size: 10.6px;
}

th small {
  margin-left: 8px;
  color: #888;
  font-size: 9px;
}

td {
  height: 20px;
  padding: 0 4px 0 0;
  border-right: 1px solid #c0c0c0;
  border-bottom: 1px solid #c0c0c0;
  text-align: right;
  box-sizing: border-box;
}

td:last-child {
  letter-spacing: 0.36px;
}

tbody tr:nth-child(even) {
  background-color: #eaeaea;
}

.c-order { width: 93px; padding-left: 8px; text-align: left; }
.c-time { width: 132px; }
.c-type { width: 66px; }
.c-vol { width: 51px; }
.c-sym { width: 67px; padding-right: 2px; }
.c-n { width: 73px; }
.c-profit { width: 110px; }

.order-cell {
  display: flex;
  align-items: center;
  gap: 5px;
  padding-left: 3px;
}

.profit-cell {
  display: flex;
  align-items: center;
  justify-content: flex-end;
  gap: 9px;
  padding-right: 1px;
}

.hit {
  background-color: #ff9c9c;
}

.balance {
  display: flex;
  align-items: center;
  height: 20px;
  padding-left: 3px;
  background-color: #c8c8c8;
  font-size: 10.9px;
  font-weight: bold;
  white-space: nowrap;
  letter-spacing: 0.075px;
}

.balance span {
  margin-left: 6px;
}

.balance .total {
  margin-left: auto;
  margin-right: 253px;
}

.terminal-space {
  flex: 1;
}

.tabs-terminal {
  height: 20px;
  background-color: #ece9d8;
  font-size: 10.8px;
}

.tabs-terminal span {
  position: relative;
  padding: 0 10.500px 0 9.400px;
}

.tabs-terminal .active {
  margin-left: 1px;
  padding: 0 9px;
}

.tabs-terminal sub {
  color: #e8202a;
  font-size: 8px;
  font-weight: bold;
  line-height: 0;
}

.status-bar {
  display: flex;
  align-items: center;
  flex: 1;
  margin-top: 2px;
  border-top: 1px solid #aca899;
  white-space: nowrap;
}

.status-bar span {
  height: 16px;
  border-right: 1px solid #aca899;
  box-sizing: border-box;
  line-height: 20px;
}

.s-help { width: 581px; padding-left: 2px; }
.s-profile { width: 110px; padding-left: 5px; }
.s-a { width: 173px; }
.s-b { width: 70px; }
.s-c { width: 67px; }

.status-bar .s-net {
  display: flex;
  gap: 3px;
  padding: 1px 0 0 5px;
  border: 0;
}

.alert-window {
  position: absolute;
  left: 10px;
  top: 718px;
  display: flex;
  align-items: center;
  width: 382px;
  height: 32px;
  padding: 0 5px 2px 7px;
  box-sizing: border-box;
  border-radius: 8px 8px 0 0;
  background: linear-gradient(#6a80d0, #88a0e8 10%, #7890e0 40%, #7a94e4);
}

.alert-window span {
  margin: 3px auto 0 10px;
  color: #d0daf6;
  font-family: "Noto Sans", sans-serif;
  font-stretch: normal;
  font-size: 13px;
  font-weight: 600;
}

.alert-window b {
  width: 18px;
  height: 18px;
  margin-left: 3px;
  border: 1px solid #c0ccf4;
  border-radius: 3px;
  background-color: #4a6ad8;
  color: #fff;
  font-size: 15px;
  line-height: 18px;
  text-align: center;
}

.alert-window .x {
  background-color: #b0586e;
}

/* taskbar */
.taskbar {
  position: relative;
  display: flex;
  align-items: center;
  height: 30px;
  overflow: hidden;
  background: linear-gradient(#1941a5 0, #3a80f0 6%, #2a66e0 14%, #245edb 50%, #245edb 85%, #1941a5 100%);
}

.start {
  display: flex;
  align-items: center;
  width: 96px;
  height: 30px;
  padding-left: 10px;
  box-sizing: border-box;
  border-radius: 0 10px 10px 0;
  background: linear-gradient(#2f7d2f 0, #62b862 8%, #3c943c 20%, #3a8e3a 70%, #2a702a 100%);
}

.start span {
  margin: -2px 0 0 4px;
  color: #fff;
  font-family: "Noto Sans", sans-serif;
  font-stretch: normal;
  font-size: 17.6px;
  font-style: italic;
  font-weight: bold;
  text-shadow: 1px 1px 2px #1a3a1a;
}

.quick {
  display: flex;
  gap: 4.900px;
  width: 226px;
  margin-left: 11px;
}

.tasks {
  display: flex;
  gap: 2px;
  width: 660px;
}

.task {
  display: flex;
  align-items: center;
  gap: 4px;
  width: 158px;
  height: 23px;
  padding-left: 8px;
  box-sizing: border-box;
  border-radius: 3px;
  background: linear-gradient(#5a96f8, #3c81f3 20%, #3a7af0 85%, #2a60d8);
  color: #fff;
  font-size: 10.8px;
  white-space: nowrap;
}

.current {
  background: linear-gradient(#163a90, #1e4fb4 20%, #2050b8);
}

.lang {
  display: flex;
  align-items: center;
  gap: 8px;
  margin-left: 12px;
  color: #fff;
  font-size: 11px;
}

.lang span {
  padding: 1px 1px;
  background-color: #316ac5;
}

.lang-q {
  font-size: 10px;
  font-weight: bold;
}

.restore {
  margin-left: 3px;
}

.tray {
  display: flex;
  align-items: center;
  gap: 1px;
  height: 30px;
  margin-left: auto;
  width: 200px;
  padding-left: 9px;
  box-sizing: border-box;
  border-left: 1px solid #0a3a90;
  background: linear-gradient(#0c59b9 0, #1ab0f4 6%, #139ee9 14%, #1290e8 60%, #0d70d0 100%);
  color: #fff;
  font-size: 10.800px;
}

.tray span {
  margin-left: 5px;
}
```

FILE: chart.js
```js
const NAVY_DASH = '4 4';

function line(x1, y1, x2, y2, color, extra) {
  return `<line x1="${x1}" y1="${y1}" x2="${x2}" y2="${y2}" stroke="${color}" ${extra || ''}/>`;
}

function rect(x, y, w, h, color) {
  return `<rect x="${x}" y="${y}" width="${w}" height="${h}" fill="${color}"/>`;
}

function poly(points, color, width) {
  return `<polyline points="${points}" fill="none" stroke="${color}" stroke-width="${width}"/>`;
}

function label(x, y, str, len, color, cls) {
  const fit = len ? `textLength="${len}"` : '';
  return `<text x="${x}" y="${y}" class="${cls || 'axis'}" fill="${color || '#000'}" ${fit}>${str}</text>`;
}

// bars: high, low, body top, body bottom, in points below the chart top (3 points = 1px)
// a trailing w marks a rising bar
const bars = `400 500 430 460,380 512 440 497,448 512 450 503 w,315 455 332 448 w,288 365 325 348,337 428 337 428,400 490 422 433 w,395 430 412 420 w,
360 415 378 402 w,362 420 376 408,362 425 408 412,400 465 420 430,405 455 433 447,425 460 440 455,440 490 448 475,435 485 468 475,
465 518 468 512,432 515 460 503 w,385 455 422 426 w,402 435 422 430,430 450 444 447 w,357 450 402 435 w,378 435 380 408,400 482 430 475,
475 592 480 582,543 615 566 572 w,548 600 567 572 w,540 605 566 572,535 605 566 588 w,556 650 558 632,612 695 625 650,515 682 522 620 w,
455 550 502 517 w,427 517 463 512 w,453 540 453 475,437 515 450 497 w,383 470 422 440 w,393 460 422 440,383 455 408 452 w,400 445 405 432,
420 475 433 457,392 482 400 463 w,390 457 402 428,390 430 400 413 w,380 450 393 400,375 460 405 430,405 475 425 432,417 460 435 450,
428 480 447 458,445 478 454 458 w,445 475 458 463 w,418 465 420 463 w,352 425 385 412 w,362 408 378 398,390 415 400 408 w,380 420 395 400,
370 402 375 400 w,365 392 375 385,380 400 388 393,362 380 368 378,363 400 370 400,370 400 392 397 w,360 385 368 380 w,362 385 372 378 w,
350 380 360 372 w,348 365 352 362 w,328 348 332 345 w,325 347 325 335,320 360 335 340 w,310 360 328 332 w,312 330 315 328 w,285 318 290 312 w,
290 350 295 335,290 350 303 332 w,290 330 305 325,313 352 315 350,310 355 312 345 w,305 335 310 328,290 335 308 330 w,308 330 315 325,
305 335 318 322 w,322 355 325 352,350 385 355 378,348 375 352 372 w,328 350 337 342 w,322 345 330 333,310 348 325 340,320 350 330 348,
320 350 330 345 w,255 312 278 305 w,235 293 262 285 w,245 280 255 258,245 290 262 278,240 298 268 290,263 298 285 290,255 325 268 283 w,
278 347 280 318,310 375 318 367,325 378 367 372,325 412 353 358 w,335 378 350 358 w,305 375 308 345 w,222 310 235 282 w,213 292 228 285,
283 312 287 303,268 327 278 320 w,280 402 283 400,400 495 405 465,368 475 385 455 w,380 475 392 405,395 430 403 420,315 430 330 428 w,
325 370 335 350,335 375 350 353,337 423 345 420,422 470 425 468,385 465 400 462 w,370 455 378 402 w,348 385 362 380 w,315 425 350 422,
395 440 412 428 w,372 435 390 420 w,390 538 395 530,425 572 427 523 w,420 520 432 463,453 567 453 567,563 640 570 615,588 680 620 655,
655 795 660 690,675 720 682 690,680 795 688 757,655 773 695 752 w,655 710 683 690,680 712 688 700,682 730 688 708,680 712 690 700,
675 715 693 705 w,650 705 657 703 w,585 660 600 655 w,560 635 580 607 w,565 655 570 650,645 680 650 675,618 680 620 672 w,600 635 612 628,
610 643 627 640,540 640 565 635 w,537 598 555 570 w,523 568 543 550,540 570 545 560,545 575 555 572,570 595 572 592,570 592 578 583,
570 597 583 588 w,583 612 587 593,592 628 597 618,605 635 610 630,590 635 592 620 w,570 600 587 592 w,560 608 572 598 w,560 583 565 570,
562 585 567 580 w,545 568 550 562 w,545 570 550 560 w,530 560 540 545 w,528 560 537 553 w,490 540 505 530 w,490 530 508 515 w,495 535 510 515,
475 530 490 512 w,468 515 473 502 w,455 490 467 475 w,442 480 447 475 w,405 445 430 440,420 448 425 432,425 463 435 442 w,400 444 402 442 w,
392 415 405 410,385 415 387 412 w,385 418 400 408,398 412 402 407,395 415 402 408,378 405 383 402 w,345 385 352 372 w,345 380 350 372 w,
342 362 348 355 w,335 372 340 350,335 365 337 350 w,337 380 337 380,370 395 375 380,350 412 378 405,363 415 378 412 w,350 430 385 428,
358 433 365 420 w,315 375 325 358 w`.split(',');

const volumes = [12, 15, 21, 14, 12, 11, 18, 10, 10, 12, 11, 11, 8, 13, 10, 6, 9, 7, 18, 18, 14, 17, 17, 18, 31, 26, 17, 26, 18, 23, 22, 27,
  20, 16, 13, 22, 23, 14, 10, 8, 14, 10, 7, 9, 11, 40, 22, 12, 11, 8, 8, 7, 9, 9, 2, 3, 5, 1, 1, 2, 2, 3, 1, 1, 0, 2, 1, 1, 2, 6, 5, 8, 6, 7,
  7, 9, 7, 4, 9, 4, 4, 4, 7, 4, 3, 1, 1, 2, 3, 6, 5, 3, 5, 9, 11, 20, 15, 17, 22, 27, 21, 17, 17, 12, 17, 22, 26, 19, 23, 16, 20, 15, 14, 18,
  14, 12, 17, 20, 15, 22, 19, 25, 17, 28, 22, 26, 30, 20, 24, 29, 21, 25, 17, 15, 14, 19, 12, 17, 18, 15, 12, 14, 10, 7, 5, 3, 4, 6, 2, 1, 3,
  1, 2, 2, 3, 1, 5, 2, 3, 2, 4, 1, 3, 6, 3, 5, 4, 7, 3, 5, 8, 5, 4, 6, 3, 5, 8, 6, 10, 8, 9, 6, 8, 5, 10, 12, 7, 14, 9, 13, 10, 8, 12, 6];

const X0 = 214;
const STEP = 4;

function drawCandles() {
  let out = '';
  bars.forEach((bar, i) => {
    const [hi, lo, top, bottom, up] = bar.trim().split(' ');
    const y = v => Math.round(105 + v / 3);
    const x = X0 + i * STEP;
    out += rect(x, y(hi), 1, y(lo) - y(hi), '#000');
    const h = Math.max(1, y(bottom) - y(top));
    out += rect(x - 1, y(top), 3, h, '#000');
    if (up && h > 2) {
      out += rect(x, y(top) + 1, 1, h - 2, '#fff');
    }
  });
  document.querySelector('#candles').innerHTML = out;
}

function drawChart() {
  let out = '';

  // session zones
  out += rect(214, 201, 132, 119, '#98fb98') + rect(214, 201, 20, 90, '#98d8c8');
  out += rect(306, 229, 40, 100, '#d6e080') + rect(346, 229, 64, 107, '#b0e0e6');
  out += rect(442, 183, 144, 59, '#ffdead') + rect(586, 176, 144, 193, '#98fb98');
  out += rect(586, 183, 32, 59, '#98d8c8');
  out += rect(690, 210, 40, 159, '#d6e080') + rect(730, 210, 64, 159, '#b0e0e6');
  out += rect(826, 210, 176, 106, '#ffdead') + rect(970, 210, 32, 39, '#98d8c8');
  out += rect(1002, 210, 78, 39, '#98fb98') + rect(1074, 210, 6, 19, '#d6e080');

  // volumes
  volumes.slice(0, 194).forEach((v, i) => {
    out += rect(X0 + i * STEP, 431 - v, 1, v, '#008000');
  });

  // day separators
  [442.5, 826.5, 1210.5].forEach(x => {
    out += line(x, 109, x, 464, '#000', 'stroke-dasharray="4 3"');
  });

  // levels
  out += line(214, 165.5, 1242, 165.5, '#dc143c') + line(214, 192.5, 1242, 192.5, '#ff4500');
  out += line(214, 213.5, 1242, 213.5, '#808080') + line(214, 330.5, 1242, 330.5, '#008000');
  out += line(214, 238.5, 1242, 238.5, '#008000', 'stroke-dasharray="9 5 2 5"');
  out += line(982, 185.5, 1242, 185.5, '#8a2be2', 'stroke-dasharray="9 3 3 3 3 3"');
  out += line(982, 277.5, 1242, 277.5, '#9acd32', 'stroke-dasharray="9 3 3 3 3 3"');
  out += line(982, 378.5, 1242, 378.5, '#00ffff', 'stroke-dasharray="9 3 3 3"');

  // averages
  out += poly('214,160 253,165 277,168 307,171 337,176 370,179 410,183 443,185.5 470,187 517,188.500 577,191 617,192 647,192.500 683,194 703,196 727,199 760,204 773,207 827,213 867,217 907,220 953,221 986,221', '#f00', 3);
  out += poly('214,258 230,257 247,256 277,255 307,253 320,257 333,261 360,261 383,259 417,257 440,256 470,252 483,250 517,244 550,239 573,237 593,232 623,230 637,228 663,229 697,230 717,233 737,243 763,257 793,264 827,269 857,274 890,274 927,270 967,261 987,259', '#f00', 2);

  const yellow = ['214,249 223,251', '258,232 267,238 277,257 287,264', '307,252 315,262 323,285 330,308', '395,230 403,233 420,247',
    '511,201 533,207 547,217 556,221 565,222', '595,190 603,195 618,218', '636,206 650,228 662,243', '671,245 682,247', '698,245 712,255 723,288 733,335 743,368 750,378 755,379',
    '824,283 837,295 848,301', '962,210 970,213 982,226'];
  const blue = ['223,251 234,237 242,233 250,231 258,232', '287,264 293,263 307,252', '352,299 367,255 377,240 385,234 395,230', '420,247 427,244 437,238 447,230 454,228 467,226 480,220 500,204 505,201 511,201',
    '565,222 577,208 587,194 595,190', '618,218 626,213 634,206', '662,244 672,245', '682,247 698,245', '755,379 763,371 767,360 773,345 782,328 793,317 807,292 815,284 824,283',
    '848,301 857,299 870,289 887,275 900,255 913,238 923,228 930,223 942,222 952,216 962,210'];
  blue.forEach(p => { out += poly(p, '#00f', 3); });
  yellow.forEach(p => { out += poly(p, '#ff0', 3); });
  out += rect(970, 236, 4, 6, '#f00');

  // frame
  out += line(210.5, 107, 210.5, 487, '#716f64') + line(213.5, 108, 213.5, 464, '#000') + line(213, 108.5, 1243, 108.5, '#000');
  out += line(1242.5, 108, 1242.5, 465, '#000') + line(213, 431.5, 1243, 431.5, '#000') + line(213, 433.5, 1243, 433.5, '#000') + line(213, 464.5, 1243, 464.5, '#000');

  // stochastic
  const key = [[214, 440], [218, 453], [230, 437], [237, 442], [242, 455], [249, 455], [254, 451], [262, 462], [278, 463], [287, 445], [291, 438], [300, 443],
    [310, 462], [317, 463], [335, 461], [342, 443], [347, 435], [367, 438], [378, 451], [385, 441], [395, 441], [403, 462], [407, 463], [414, 460], [423, 437],
    [430, 437], [437, 441], [447, 442], [456, 451], [462, 448], [470, 436], [483, 436], [492, 439], [498, 436], [503, 447], [512, 454], [522, 453], [527, 443],
    [533, 446], [542, 462], [550, 455], [558, 437], [568, 442], [577, 436], [583, 437], [593, 458], [607, 462], [615, 460], [623, 437], [629, 443], [636, 460],
    [645, 462], [652, 441], [660, 437], [668, 458], [676, 463], [686, 450], [692, 436], [702, 438], [709, 455], [716, 462], [735, 463], [745, 457], [752, 441],
    [758, 452], [765, 437], [776, 436], [786, 440], [794, 452], [802, 438], [812, 436], [822, 448], [830, 461], [838, 457], [846, 440], [856, 436], [866, 438],
    [876, 436], [888, 437], [898, 436], [908, 445], [918, 460], [928, 456], [938, 438], [950, 437], [958, 444], [966, 461], [974, 463], [980, 455], [986, 442]];
  const k = [];
  for (let x = 214, n = 0; x <= 986; x += 4) {
    while (key[n + 1] && key[n + 1][0] < x) n++;
    const [ax, ay] = key[n];
    const [bx, by] = key[n + 1] || key[n];
    k.push(bx === ax ? by : ay + (by - ay) * (x - ax) / (bx - ax));
  }
  const d = k.map((v, i) => (v + k[Math.max(0, i - 1)] + k[Math.max(0, i - 2)]) / 3);
  out += line(215, 440.5, 1242, 440.5, '#0000ff', `stroke-dasharray="${NAVY_DASH}"`) + line(215, 458.5, 1242, 458.5, '#0000ff', `stroke-dasharray="${NAVY_DASH}"`);
  out += poly(k.map((v, i) => `${X0 + i * 4},${v}`).join(' '), '#00f', 1);
  out += poly(d.map((v, i) => `${X0 + i * 4},${v}`).join(' '), '#f00', 1);

  // scales
  [['0.7350', 110], ['0.7335', 144], ['0.7320', 178], ['0.7290', 247], ['0.7275', 281], ['0.7260', 316], ['0.7245', 350], ['0.7230', 385], ['0.7215', 419]].forEach(([t, y]) => {
    out += line(1243, y + 0.5, 1246, y + 0.5, '#000') + label(1248, y + 4, t, 28);
  });
  [['0.7326', 165, '#dc143c'], ['0.7314', 192, '#ff4500'], ['0.7305', 213, '#000'], ['0.7254', 329, '#008000']].forEach(([t, y, c]) => {
    out += rect(1244, y - 6, 36, 11, c) + label(1248, y + 3, t, 28, '#fff');
  });
  out += label(1245, 444, '100', 16) + label(1245, 444, '80', 11) + label(1245, 462, '20', 11) + label(1245, 462, '0', 5);
  ['6 Apr 2016', '6 Apr 13:45', '6 Apr 17:45', '6 Apr 21:45', '7 Apr 01:45', '7 Apr 05:45', '7 Apr 09:45', '7 Apr 13:45', '7 Apr 17:45', '7 Apr 21:45',
    '8 Apr 01:45', '8 Apr 05:45', '8 Apr 09:45'].forEach((t, i) => {
    out += line(214.5 + i * 64, 465, 214.5 + i * 64, 468, '#000') + label(213 + i * 64, 477, t, i ? 49 : 46);
  });

  // captions
  out += '<path d="M217 115h7l-3.500 3.500z"/><path d="M988 109h11l-5.500 5z" fill="#808080"/>';
  out += label(229, 120, 'CADCHF,M15&#160; 0.7300 0.7306 0.7298 0.7305', 189);
  out += label(216, 163, '0.7326', 27) + label(221, 163, '#1754209147 sl', 65);
  out += label(220, 236, '#1754209147 sell 0.05', 93);
  out += label(217, 446, 'Stoch(5,3,3) 77.4194 56.2996', 123);
  out += label(1128, 121, 'IceFX.TraderAgent.Pro', 95);
  out += '<circle cx="1231.500" cy="118" r="5" fill="none" stroke="#000"/><path d="M1229 119c1 3 4 3 5 0" fill="none" stroke="#000"/><path d="M1229 115.500h1.500M1233 115.500h1.500" stroke="#000" stroke-width="1.500"/>';
  [[268, 217, 59], [371, 244, 47], [508, 198, 28], [652, 192, 84], [756, 226, 69], [892, 226, 46]].forEach(([x, y, t]) => {
    out += label(x, y, t, 12, '#f22', 'arial');
  });
  out += label(577, 177, '[SL] 1754209147: -32.0 pips (-16.71)', 178, '#dc143c', 'arial');
  out += label(582, 342, '[TP] 1754209147: 40.0 pips (20.89)', 169, '#008000', 'arial');
  out += label(1008, 224, '&lt; 00:09:25', 65, '#f00', 'arial') + label(1037, 226, '17', 11, '#f22', 'arial');
  out += label(1008, 196, 'R1', 12, '#808080', 'arial') + label(1011, 288, 'P', 7, '#808080', 'arial') + label(1008, 389, 'S1', 12, '#808080', 'arial');

  document.querySelector('#chart').innerHTML = out;
}

function drawTicks() {
  const mid = [[11, 242], [13, 233], [16, 233], [18, 227.5], [28, 227.5], [31, 217], [34, 211.5], [39, 211.5], [43, 188], [47, 206], [50, 194], [55, 194],
    [58, 200], [63, 205.5], [67, 203], [72, 205.5], [77, 205.5], [80, 200], [93, 200], [96, 189], [100, 200], [105, 192], [110, 162], [115, 155.5],
    [121, 155.5], [123, 144], [126, 150], [130, 156], [133, 144], [137, 161], [139, 153]];
  const trace = (shift) => {
    let pts = '';
    for (let x = 11, n = 0, s = 1; x <= 139; x += 1.5, s = -s) {
      while (mid[n + 1] && mid[n + 1][0] < x) n++;
      const [ax, ay] = mid[n];
      const [bx, by] = mid[n + 1];
      pts += `${x},${ay + (by - ay) * (x - ax) / (bx - ax) + s * 3.2 + shift} `;
    }
    return pts + `139.500,${152.5 + shift} 166,${152.5 + shift}`;
  };
  let out = '';
  [43.5, 75.5, 107.5, 139.5].forEach(x => { out += line(x, 125, x, 280, '#c8c8c8', 'stroke-dasharray="4 3"'); });
  [151.5, 183.5, 215.5, 247.5].forEach(y => { out += line(11, y, 166, y, '#c8c8c8', 'stroke-dasharray="4 3"') + line(167, y, 169, y, '#000'); });
  out += '<rect x="10.500" y="124.500" width="156" height="156" fill="none" stroke="#000"/>';
  out += poly(trace(0), '#ff6060', 1) + poly(trace(23), '#0060ff', 1);
  out += label(13, 135, 'GBPUSD', 39);
  [['1.4060', 187], ['1.4054', 219], ['1.4049', 251], ['1.4043', 280]].forEach(([t, y]) => { out += label(172, y, t, 28); });
  out += rect(168, 147, 36, 11, '#ff6060') + label(172, 156, '1.4066', 28, '#fff');
  out += rect(168, 170, 36, 11, '#0060ff') + label(172, 179, '1.4062', 28, '#fff');
  document.querySelector('#ticks').innerHTML = out;
}

function drawTree() {
  let out = '';
  [['+', 'Осцилляторы'], ['+', 'Объемы'], ['−', 'Билла Вильямса']].forEach(([sign, name]) => {
    out += `<div class="branch" data-sign="${sign}"><i class="dots"></i><i class="fn">f</i>${name}</div>`;
  });
  ['Accelerator Oscillator', 'Alligator', 'Awesome Oscillator', 'Fractals', 'Gator Oscillator', 'Market Facilitation Index'].forEach(name => {
    out += `<div class="leaf"><i class="dots"></i><i class="fn">f</i>${name}</div>`;
  });
  document.querySelector('#tree').innerHTML = out;
}

function drawOrders() {
  const orders = [
    ['1754206927', '2016.04.08 08:43:27', '0.03', 'gbpusd', '1.4073', '1.4098', '1.4028', '1.4066', '7'],
    ['1754205809', '2016.04.08 08:15:04', '0.03', 'gbpusd', '1.4062', '1.4098', '1.4028', '1.4066', '-4'],
    ['1754209149', '2016.04.08 09:19:10', '0.07', 'gbpcad', '1.8438', '0.0000', '1.8398', '1.8426', '12'],
    ['1754204704', '2016.04.08 07:56:17', '0.05', 'eurusd', '1.1365', '1.1395', '1.1325', '1.1356', '9'],
    ['1754209151', '2016.04.08 09:19:10', '0.06', 'cadjpy', '82.95', '83.15', '82.55', '83.10', '-15'],
    ['1754209147', '2016.04.08 09:19:10', '0.05', 'cadchf', '0.7294', '0.7326', '0.7254', '0.7314', '-20'],
    ['1754209146', '2016.04.08 09:19:10', '0.06', 'audjpy', '81.95', '82.15', '81.55', '82.03', '-8']
  ];
  const doc = '<svg width="14" height="16"><path d="M.5 1.500h8l3 3v10H.5z" fill="#fff" stroke="#666"/><path d="M8.500 1.500v3h3" fill="none" stroke="#666"/><circle cx="10" cy="12" r="3.500" fill="#e04818" stroke="#b02a08" stroke-width=".5"/></svg>';
  const cross = '<svg width="9" height="9"><path d="M1.500 1.500l6 6M7.500 1.500l-6 6" stroke="#999" stroke-width="1.800"/></svg>';
  document.querySelector('#orders').innerHTML = orders.map(o => `<tr>
    <td><div class="order-cell">${doc}${o[0]}</div></td><td>${o[1]}</td><td>sell</td><td>${o[2]}</td><td>${o[3]}</td><td>${o[4]}</td>
    <td class="${o[5] === '83.15' ? 'hit' : ''}">${o[5]}</td><td>${o[6]}</td><td>${o[7]}</td><td>0.00</td><td>0.00</td><td>0.00</td>
    <td><div class="profit-cell">${o[8]}${cross}</div></td><td>IceFX.TraderAgent</td></tr>`).join('');
}

function drawSignal() {
  let out = '';
  for (let i = 0; i < 10; i++) {
    const split = 9 - i * 0.7;
    out += rect(i * 2.4, 1, 1.6, split - 1, '#6a8a00') + rect(i * 2.4, split + 1, 1.6, 13 - split, '#104a70');
  }
  document.querySelector('#signal').innerHTML = out;
}

drawChart();
drawCandles();
drawTicks();
drawTree();
drawOrders();
drawSignal();
```
